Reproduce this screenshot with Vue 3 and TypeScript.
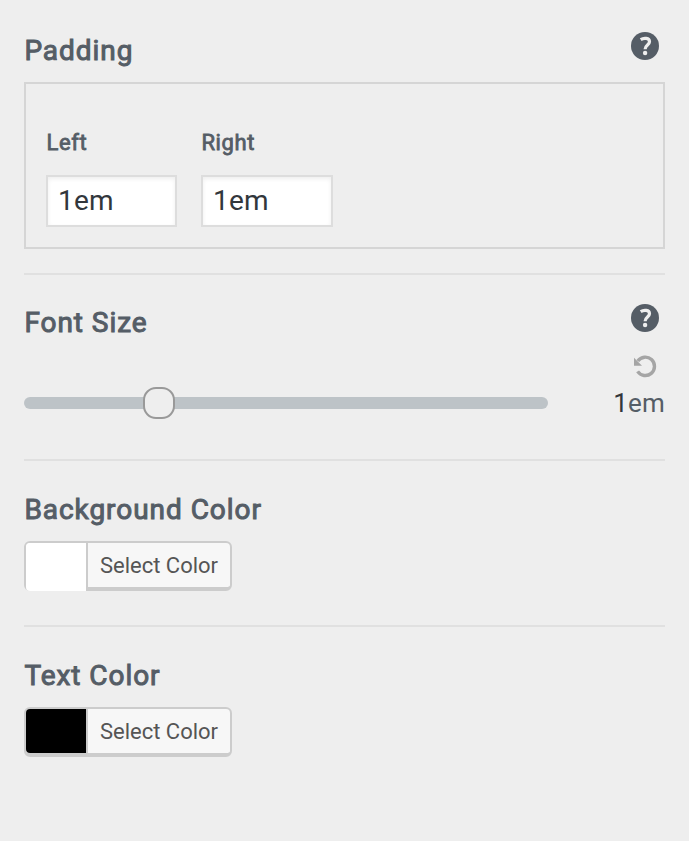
<script setup lang="ts">
import { ref } from 'vue'

interface PaddingField { id: string; label: string; value: string }
interface ColorField { id: string; label: string; color: string }

const paddings = ref<PaddingField[]>([
  { id: 'left', label: 'Left', value: '1em' },
  { id: 'right', label: 'Right', value: '1em' },
])
const colors: ColorField[] = [
  { id: 'background', label: 'Background Color', color: '#ffffff' },
  { id: 'text', label: 'Text Color', color: '#000000' },
]
const fontSize = ref('1')
const sliderPosition = 119
</script>

<template>
  <main class="panel">
    <section class="control padding-control">
      <header class="head">
        <h2 class="title">Padding</h2>
        <svg class="help" viewBox="0 0 28 28">
          <circle cx="14" cy="14" r="14" fill="#555d66" />
          <path d="M9.7 7.6C12.8 5.6 18.5 5.8 18.5 9.8C18.5 13 14.1 13.1 14.1 17.2" fill="none" stroke="#eee" stroke-width="3.2" />
          <circle cx="14.1" cy="21" r="2.2" fill="#eee" />
        </svg>
      </header>
      <div class="box">
        <label v-for="p in paddings" :key="p.id" class="field" :class="p.id">
          <span class="field-label">{{ p.label }}</span>
          <input v-model="p.value" class="field-input" type="text" />
        </label>
      </div>
    </section>

    <section class="control size-control">
      <header class="head">
        <h2 class="title">Font Size</h2>
        <svg class="help" viewBox="0 0 28 28">
          <circle cx="14" cy="14" r="14" fill="#555d66" />
          <path d="M9.7 7.6C12.8 5.6 18.5 5.8 18.5 9.8C18.5 13 14.1 13.1 14.1 17.2" fill="none" stroke="#eee" stroke-width="3.2" />
          <circle cx="14.1" cy="21" r="2.2" fill="#eee" />
        </svg>
      </header>
      <div class="reset-row">
        <svg class="reset" viewBox="0 0 24 24">
          <path d="M4.8 7A9.2 9.2 0 1 1 4.6 17.4" fill="none" stroke="#a5a5a5" stroke-width="3.4" />
          <path d="M1 3.8V11.8H9Z" fill="#a5a5a5" />
        </svg>
      </div>
      <div class="slider-row">
        <div class="track">
          <span class="thumb" :style="{ marginLeft: sliderPosition + 'px' }"></span>
        </div>
        <div class="value"><span class="number">{{ fontSize }}</span>em</div>
      </div>
    </section>

    <section v-for="c in colors" :key="c.id" class="control color-control">
      <header class="head">
        <h2 class="title">{{ c.label }}</h2>
      </header>
      <button class="picker" :class="c.id" type="button">
        <span class="swatch" :style="{ backgroundColor: c.color }"></span>
        <span class="picker-text">Select Color</span>
      </button>
    </section>
  </main>
</template>

<style>
body {
  background: #eee;
}
</style>

<style scoped>
.panel {
  box-sizing: border-box;
  min-height: 841px;
  padding: 2px 24px 0;
  background: #eee;
  color: #555d66;
  font-family: Roboto, sans-serif;
}
.control {
  box-sizing: border-box;
  border-bottom: 2px solid #e0e0e0;
}
.control:last-child {
  border-bottom: 0;
}
.padding-control {
  height: 273px;
  padding-top: 28px;
}
.size-control {
  height: 186px;
  padding-top: 27px;
}
.color-control {
  height: 166px;
  padding-top: 28px;
}
.head {
  display: flex;
  justify-content: space-between;
  height: 40px;
  padding-right: 6px;
}
.title {
  margin: 0;
  padding-left: 0.4px;
  font-size: 28px;
  line-height: 42px;
  font-weight: 400;
  letter-spacing: 0.95px;
  -webkit-text-stroke: 1px #555d66;
}
.help {
  width: 28px;
  height: 28px;
  margin-top: 2px;
}
.box {
  display: flex;
  gap: 24px;
  box-sizing: border-box;
  height: 167px;
  margin-top: 12px;
  padding: 42px 20px 0;
  border: 2px solid #d5d5d5;
}
.field {
  display: flex;
  flex-direction: column;
  width: 131px;
}
.field.right {
  width: 132px;
}
.field-label {
  height: 49px;
  padding-left: 0.4px;
  font-size: 22px;
  line-height: 34px;
  letter-spacing: 0.65px;
  -webkit-text-stroke: 0.8px #555d66;
}
.field-input {
  box-sizing: border-box;
  width: 100%;
  height: 52px;
  padding: 0 10px 2px;
  border: 2px solid #ddd;
  border-radius: 0;
  background: #fff;
  box-shadow: inset 0 2px 4px rgba(0, 0, 0, 0.07);
  color: #32373c;
  font: 28px Roboto, sans-serif;
  letter-spacing: 0.2px;
  outline: 0;
}
.reset-row {
  display: flex;
  justify-content: flex-end;
  padding: 12px 8px 0 0;
}
.reset {
  width: 24px;
  height: 24px;
}
.slider-row {
  display: flex;
  justify-content: space-between;
  align-items: center;
  height: 50px;
}
.track {
  display: flex;
  align-items: center;
  width: 524px;
  height: 12px;
  border-radius: 6px;
  background: #bdc3c7;
}
.thumb {
  box-sizing: border-box;
  width: 32px;
  height: 32px;
  border: 2px solid #999;
  border-radius: 13px;
  background: #eee;
}
.value {
  font-size: 26px;
  line-height: 32px;
  letter-spacing: 0.2px;
}
.number {
  color: #32373c;
}
.picker {
  display: flex;
  box-sizing: border-box;
  width: 208px;
  height: 50px;
  margin: 12px 0 0;
  padding: 0;
  border: 2px solid #ccc;
  border-bottom-width: 4px;
  border-radius: 6px;
  background: #f7f7f7;
  color: #555;
  font: 22px Roboto, sans-serif;
}
.swatch {
  box-sizing: border-box;
  width: 60px;
  height: 44px;
  border-radius: 4px 0 0 4px;
}
.background .swatch {
  height: 48px;
}
.picker-text {
  flex: 1;
  height: 44px;
  border-left: 2px solid #ccc;
  line-height: 45px;
  text-align: center;
}
</style>
